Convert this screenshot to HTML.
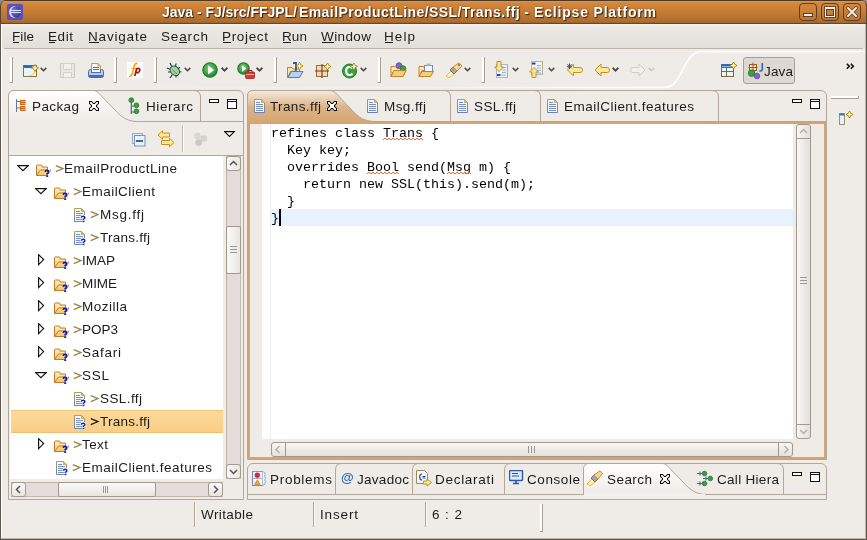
<!DOCTYPE html>
<html><head><meta charset="utf-8">
<style>
*{box-sizing:border-box}
html,body{margin:0;padding:0}
body{width:867px;height:540px;overflow:hidden;position:relative;background:#efebe7;font-family:'Liberation Sans',sans-serif;font-size:14px;color:#1a1a1a}
.a{position:absolute}
.t{position:absolute;white-space:pre;line-height:1;will-change:transform}
</style></head><body>
<div class="a" style="left:0;top:0;width:8px;height:8px;background:#8e8e8e"></div>
<div class="a" style="left:859px;top:0;width:8px;height:8px;background:#8e8e8e"></div>
<div class="a" style="left:0;top:0;width:867px;height:24px;background:linear-gradient(#4c3a28 0px,#4c3a28 1px,#e49441 1px,#d5873b 3px,#c67b34 12px,#ad6c2e 22px,#9a6030 23px,#6a4526 23px,#6a4526 24px);border-radius:6px 6px 0 0;border-left:1px solid #5a4530;border-right:1px solid #5a4530"></div>
<div class="a" style="left:0;top:24px;width:1px;height:516px;background:#5f574e"></div>
<div class="a" style="left:1px;top:24px;width:1px;height:514px;background:#fff"></div>
<div class="a" style="left:866px;top:24px;width:1px;height:516px;background:#5f574e"></div>
<div class="a" style="left:865px;top:24px;width:1px;height:515px;background:#c2b8ae"></div>
<div class="a" style="left:1px;top:538px;width:865px;height:1px;background:#c2b8ae"></div>
<div class="a" style="left:0;top:539px;width:867px;height:1px;background:#5f574e"></div>
<div class="a" style="left:7px;top:4px;width:16px;height:16px;background:#5a4fc0;border-radius:2px"></div>
<div class="a" style="left:9px;top:6px;width:12px;height:12px;border-radius:50%;background:radial-gradient(circle at 40% 40%,#6d7fd8,#27206e)"></div>
<div class="a" style="left:9px;top:6px;width:12px;height:12px;border-radius:50%;box-shadow:inset 2px 0 0 #e8d0f0"></div>
<div class="a" style="left:11px;top:10px;width:10px;height:1px;background:#e0e4ff"></div>
<div class="a" style="left:11px;top:12px;width:10px;height:1px;background:#e0e4ff"></div>
<div class="t" style="left:162px;top:5px;font-size:14px;font-weight:700;color:#fff;font-family:'Liberation Sans',sans-serif;letter-spacing:-0.021px;text-shadow:1px 1px 1px #3a2208,0 0 1.5px #5a3a1a;">Java - FJ/src/FFJPL/</div>
<div class="t" style="left:299px;top:5px;font-size:14px;font-weight:700;color:#fff;font-family:'Liberation Sans',sans-serif;letter-spacing:0.418px;text-shadow:1px 1px 1px #3a2208,0 0 1.5px #5a3a1a;">EmailProductLine/SSL/Trans.ffj -</div>
<div class="t" style="left:534px;top:5px;font-size:14px;font-weight:700;color:#fff;font-family:'Liberation Sans',sans-serif;letter-spacing:0.820px;text-shadow:1px 1px 1px #3a2208,0 0 1.5px #5a3a1a;">Eclipse Platform</div>
<div class="a" style="left:799px;top:3px;width:18px;height:18px;border:1px solid #5a3f22;border-radius:4px;background:linear-gradient(#d4873c,#bf7633)"></div>
<div class="a" style="left:821px;top:3px;width:18px;height:18px;border:1px solid #5a3f22;border-radius:4px;background:linear-gradient(#d4873c,#bf7633)"></div>
<div class="a" style="left:843px;top:3px;width:18px;height:18px;border:1px solid #5a3f22;border-radius:4px;background:linear-gradient(#d4873c,#bf7633)"></div>
<div class="a" style="left:803px;top:13px;width:10px;height:4px;background:#f4efe6;border:1px solid #5a3f22"></div>
<div class="a" style="left:825px;top:7px;width:10px;height:10px;border:1px solid #f4efe6;border-top-width:2px;box-shadow:inset 0 0 0 1px #5a3f22,0 0 0 1px #6a4a28"></div>
<svg class="a" style="left:843px;top:3px" width="18" height="18" viewBox="0 0 18 18"><path d="M5 5L13 13M13 5L5 13" stroke="#5a3f22" stroke-width="3.6" stroke-linecap="round"/><path d="M5 5L13 13M13 5L5 13" stroke="#f4efe6" stroke-width="2" stroke-linecap="round"/></svg>
<div class="a" style="left:2px;top:24px;width:863px;height:24px;background:linear-gradient(#f6f4f1,#ece9e5 3px,#e3dfd9)"></div>
<div class="a" style="left:4px;top:48px;width:859px;height:1px;background:#bdb4a9"></div>
<div class="t" style="left:12px;top:30px;font-size:13.5px;font-weight:400;color:#1c1c1c;font-family:'Liberation Sans',sans-serif;letter-spacing:0.078px;">File</div>
<div class="t" style="left:48px;top:30px;font-size:13.5px;font-weight:400;color:#1c1c1c;font-family:'Liberation Sans',sans-serif;letter-spacing:0.578px;">Edit</div>
<div class="t" style="left:88px;top:30px;font-size:13.5px;font-weight:400;color:#1c1c1c;font-family:'Liberation Sans',sans-serif;letter-spacing:0.815px;">Navigate</div>
<div class="t" style="left:161px;top:30px;font-size:13.5px;font-weight:400;color:#1c1c1c;font-family:'Liberation Sans',sans-serif;letter-spacing:0.844px;">Search</div>
<div class="t" style="left:222px;top:30px;font-size:13.5px;font-weight:400;color:#1c1c1c;font-family:'Liberation Sans',sans-serif;letter-spacing:0.661px;">Project</div>
<div class="t" style="left:282px;top:30px;font-size:13.5px;font-weight:400;color:#1c1c1c;font-family:'Liberation Sans',sans-serif;letter-spacing:0.117px;">Run</div>
<div class="t" style="left:321px;top:30px;font-size:13.5px;font-weight:400;color:#1c1c1c;font-family:'Liberation Sans',sans-serif;letter-spacing:0.397px;">Window</div>
<div class="t" style="left:384px;top:30px;font-size:13.5px;font-weight:400;color:#1c1c1c;font-family:'Liberation Sans',sans-serif;letter-spacing:1.078px;">Help</div>
<div class="a" style="left:13px;top:42px;width:6px;height:1px;background:#1c1c1c"></div>
<div class="a" style="left:49px;top:42px;width:6px;height:1px;background:#1c1c1c"></div>
<div class="a" style="left:89px;top:42px;width:10px;height:1px;background:#1c1c1c"></div>
<div class="a" style="left:179px;top:42px;width:8px;height:1px;background:#1c1c1c"></div>
<div class="a" style="left:223px;top:42px;width:8px;height:1px;background:#1c1c1c"></div>
<div class="a" style="left:283px;top:42px;width:8px;height:1px;background:#1c1c1c"></div>
<div class="a" style="left:322px;top:42px;width:12px;height:1px;background:#1c1c1c"></div>
<div class="a" style="left:385px;top:42px;width:8px;height:1px;background:#1c1c1c"></div>
<div class="a" style="left:10px;top:57px;width:2px;height:25px;background:#fff"></div>
<div class="a" style="left:12px;top:57px;width:1px;height:26px;background:#ab9f93"></div>
<div class="a" style="left:10px;top:82px;width:3px;height:1px;background:#ab9f93"></div>
<div class="a" style="left:114px;top:57px;width:2px;height:25px;background:#fff"></div>
<div class="a" style="left:116px;top:57px;width:1px;height:26px;background:#ab9f93"></div>
<div class="a" style="left:114px;top:82px;width:3px;height:1px;background:#ab9f93"></div>
<div class="a" style="left:154px;top:57px;width:2px;height:25px;background:#fff"></div>
<div class="a" style="left:156px;top:57px;width:1px;height:26px;background:#ab9f93"></div>
<div class="a" style="left:154px;top:82px;width:3px;height:1px;background:#ab9f93"></div>
<div class="a" style="left:274px;top:57px;width:2px;height:25px;background:#fff"></div>
<div class="a" style="left:276px;top:57px;width:1px;height:26px;background:#ab9f93"></div>
<div class="a" style="left:274px;top:82px;width:3px;height:1px;background:#ab9f93"></div>
<div class="a" style="left:378px;top:57px;width:2px;height:25px;background:#fff"></div>
<div class="a" style="left:380px;top:57px;width:1px;height:26px;background:#ab9f93"></div>
<div class="a" style="left:378px;top:82px;width:3px;height:1px;background:#ab9f93"></div>
<div class="a" style="left:482px;top:57px;width:2px;height:25px;background:#fff"></div>
<div class="a" style="left:484px;top:57px;width:1px;height:26px;background:#ab9f93"></div>
<div class="a" style="left:482px;top:82px;width:3px;height:1px;background:#ab9f93"></div>
<svg class="a" style="left:40px;top:67px" width="8" height="6" viewBox="0 0 8 6"><path d="M0.7 0.9L3.5 3.7L6.3 0.9" fill="none" stroke="#4a4a4a" stroke-width="1.6"/></svg>
<svg class="a" style="left:221px;top:67px" width="8" height="6" viewBox="0 0 8 6"><path d="M0.7 0.9L3.5 3.7L6.3 0.9" fill="none" stroke="#4a4a4a" stroke-width="1.6"/></svg>
<svg class="a" style="left:256px;top:67px" width="8" height="6" viewBox="0 0 8 6"><path d="M0.7 0.9L3.5 3.7L6.3 0.9" fill="none" stroke="#4a4a4a" stroke-width="1.6"/></svg>
<svg class="a" style="left:612px;top:67px" width="8" height="6" viewBox="0 0 8 6"><path d="M0.7 0.9L3.5 3.7L6.3 0.9" fill="none" stroke="#4a4a4a" stroke-width="1.6"/></svg>
<div class="a" style="left:743px;top:57px;width:52px;height:27px;background:#ddd8d1;border:1px solid #a69e94;border-radius:3px"></div>
<svg class="a" style="left:22px;top:62px" width="18" height="16" viewBox="0 0 18 16"><rect x="1.5" y="3.5" width="13" height="11" fill="#e4f6fc" stroke="#8a7448" stroke-width="1"/><rect x="1.5" y="3" width="9" height="3" fill="#2e6bb8"/><path d="M13.5 7 Q13.5 13 6 14" fill="none" stroke="#ffd24a" stroke-width="1"/><path d="M13 2.5 L14.2 4.8 L16.5 6 L14.2 7.2 L13 9.5 L11.8 7.2 L9.5 6 L11.8 4.8 Z" fill="#f7e27a" stroke="#a8800c" stroke-width="1"/><path d="M13 3.5V8.5M10.5 6H15.5" stroke="#fffbe0" stroke-width="0.8"/></svg>
<svg class="a" style="left:60px;top:63px" width="15" height="15" viewBox="0 0 15 15"><path d="M0.5 0.5H14.5V14.5H0.5Z" fill="#ebe8e3" stroke="#cdc8c1" stroke-width="1"/><rect x="3.5" y="0.5" width="8" height="6" fill="#f3f1ee" stroke="#d6d1ca"/><rect x="3.5" y="9.5" width="8" height="5" fill="#f3f1ee" stroke="#d6d1ca"/></svg>
<svg class="a" style="left:88px;top:63px" width="16" height="15" viewBox="0 0 16 15"><path d="M3.5 0.5 H10 L12.5 3 V9.5 H3.5 Z" fill="#f6f8fc" stroke="#b89d52"/><path d="M10 0.5 V3 H12.5" fill="#e8c070" stroke="#c8a050"/><path d="M5 4.5h6M5 6.5h6" stroke="#4a6bb0" stroke-width="1.2"/><path d="M0.5 8.5 Q0.5 6.5 2.5 6.5 H3.5 V9.5 H12.5 V6.5 H13.5 Q15.5 6.5 15.5 8.5 V12.5 Q15.5 14.5 13.5 14.5 H2.5 Q0.5 14.5 0.5 12.5 Z" fill="#b8cdea" stroke="#4a6bb0"/><rect x="1" y="12" width="14" height="2.2" fill="#4a6bb0"/></svg>
<svg class="a" style="left:127px;top:62px" width="16" height="16" viewBox="0 0 16 16"><rect x="0" y="0" width="16" height="16" fill="#fdfdfd"/><path d="M2 14.5 Q5 14.5 6 9 L7.5 3 Q8.5 1 10.5 1.5" fill="none" stroke="#f5a21c" stroke-width="1.6"/><path d="M4.5 6.5 H9" stroke="#f5a21c" stroke-width="1"/><path d="M9.8 6 L7.8 14 M9.6 7 Q12.8 5.5 12.8 8 Q12.5 11 9.4 10.5" fill="none" stroke="#b01010" stroke-width="1.7"/></svg>
<svg class="a" style="left:166px;top:62px" width="17" height="17" viewBox="0 0 17 17"><g stroke="#1c3a3a" stroke-width="1.2"><path d="M4 1 L6 5M10 1.5L9.5 4.5M1 6 L5 7.5M2 10L5.5 10M4 16L6.5 12.5M15.5 10L12 9.5M14 5.5L11 7M10 15.5 L10 12"/></g><ellipse cx="8.8" cy="8.8" rx="4.2" ry="5.3" transform="rotate(-45 8.8 8.8)" fill="#a8d08a" stroke="#1f5a7a" stroke-width="1"/><path d="M6.5 8 L11 12" stroke="#6a9a50" stroke-width="1"/></svg>
<svg class="a" style="left:184px;top:67px" width="8" height="6" viewBox="0 0 8 6"><path d="M0.7 0.9L3.5 3.7L6.3 0.9" fill="none" stroke="#4a4a4a" stroke-width="1.6"/></svg>
<svg class="a" style="left:202px;top:62px" width="16" height="16" viewBox="0 0 16 16"><defs><radialGradient id="rg" cx="0.45" cy="0.4" r="0.6"><stop offset="0" stop-color="#8ad07a"/><stop offset="0.7" stop-color="#3a9e40"/><stop offset="1" stop-color="#237a2a"/></radialGradient></defs><circle cx="8" cy="8" r="7.2" fill="url(#rg)" stroke="#1f7a2a" stroke-width="1.1"/><path d="M6 3.6 L12.2 8 L6 12.4 Z" fill="#fff"/></svg>
<svg class="a" style="left:221px;top:67px" width="8" height="6" viewBox="0 0 8 6"><path d="M0.7 0.9L3.5 3.7L6.3 0.9" fill="none" stroke="#4a4a4a" stroke-width="1.6"/></svg>
<svg class="a" style="left:237px;top:62px" width="18" height="17" viewBox="0 0 18 17"><circle cx="6.5" cy="6.5" r="5.7" fill="url(#rg)" stroke="#1f7a2a" stroke-width="1.1"/><path d="M5 3.3 L9.5 6.5 L5 9.7 Z" fill="#fff"/><rect x="8.5" y="10" width="9" height="6.5" rx="1" fill="#d83a32" stroke="#a02020" stroke-width="0.8"/><path d="M11 10 V8.5 H15 V10" fill="none" stroke="#a02020" stroke-width="1"/><path d="M9 12.5 H17" stroke="#f8c0b0" stroke-width="0.8"/></svg>
<svg class="a" style="left:256px;top:67px" width="8" height="6" viewBox="0 0 8 6"><path d="M0.7 0.9L3.5 3.7L6.3 0.9" fill="none" stroke="#4a4a4a" stroke-width="1.6"/></svg>
<svg class="a" style="left:286px;top:62px" width="18" height="16" viewBox="0 0 18 16"><path d="M1.5 15.5 L1.5 5.5 L6 5.5 L7 7 L13.5 7 L13.5 9" fill="#fbe7b0" stroke="#c0822a" stroke-width="1"/><path d="M1.5 15.5 L4.5 9.5 L16.5 9.5 L13.5 15.5 Z" fill="#f3cf7a" stroke="#c0822a" stroke-width="1"/><path d="M7 1 H10 V8 Q10 10 7.5 10 Q6 10 5.5 9" fill="none" stroke="#2a5ab0" stroke-width="1.8"/><path d="M2 15.5 L5.5 9.5 H17 L13.5 15.5 Z" fill="#b8d4f4" stroke="#5a7ac0" stroke-width="1"/><path d="M13.5 0.5 L14.7 2.8 L17.0 4 L14.7 5.2 L13.5 7.5 L12.3 5.2 L10.0 4 L12.3 2.8 Z" fill="#f7e27a" stroke="#a8800c" stroke-width="1"/><path d="M13.5 1.5V6.5M11.0 4H16.0" stroke="#fffbe0" stroke-width="0.8"/></svg>
<svg class="a" style="left:315px;top:62px" width="17" height="16" viewBox="0 0 17 16"><rect x="1.5" y="3.5" width="11" height="11" fill="#f0dcb0" stroke="#a06a40" stroke-width="1"/><path d="M7 2V16M0 9H14" stroke="#6a3a20" stroke-width="1.1"/><path d="M12.5 1.0 L13.7 3.3 L16.0 4.5 L13.7 5.7 L12.5 8.0 L11.3 5.7 L9.0 4.5 L11.3 3.3 Z" fill="#f7e27a" stroke="#a8800c" stroke-width="1"/><path d="M12.5 2.0V7.0M10.0 4.5H15.0" stroke="#fffbe0" stroke-width="0.8"/></svg>
<svg class="a" style="left:342px;top:62px" width="17" height="17" viewBox="0 0 17 17"><circle cx="7.5" cy="9" r="7" fill="#3aa043" stroke="#1f7a2a" stroke-width="1"/><path d="M10.5 6.3 Q9.5 5 7.8 5 Q4.2 5 4.2 9 Q4.2 13 7.8 13 Q9.5 13 10.5 11.7" fill="none" stroke="#fff" stroke-width="2.2"/><path d="M12 1.0 L13.2 3.3 L15.5 4.5 L13.2 5.7 L12 8.0 L10.8 5.7 L8.5 4.5 L10.8 3.3 Z" fill="#f7e27a" stroke="#a8800c" stroke-width="1"/><path d="M12 2.0V7.0M9.5 4.5H14.5" stroke="#fffbe0" stroke-width="0.8"/></svg>
<svg class="a" style="left:360px;top:67px" width="8" height="6" viewBox="0 0 8 6"><path d="M0.7 0.9L3.5 3.7L6.3 0.9" fill="none" stroke="#4a4a4a" stroke-width="1.6"/></svg>
<svg class="a" style="left:390px;top:62px" width="17" height="16" viewBox="0 0 17 16"><path d="M1.0 14.5 L1.0 4.5 L5.5 4.5 L6.5 6 L13.0 6 L13.0 8" fill="#fbe7b0" stroke="#c0822a" stroke-width="1"/><path d="M1.0 14.5 L4.0 8.5 L16.0 8.5 L13.0 14.5 Z" fill="#f3cf7a" stroke="#c0822a" stroke-width="1"/><circle cx="9" cy="3.6" r="2.9" fill="#7a6ac8" stroke="#5a4aa8" stroke-width="0.8"/><circle cx="13" cy="6.6" r="2.9" fill="#3aa043" stroke="#1f7a2a" stroke-width="0.8"/><path d="M1 14.5 L4 8.5 H16 L13 14.5 Z" fill="#f3cf7a" stroke="#c0822a" stroke-width="1"/></svg>
<svg class="a" style="left:418px;top:62px" width="16" height="16" viewBox="0 0 16 16"><path d="M1.0 14.5 L1.0 4.5 L5.5 4.5 L6.5 6 L12.0 6 L12.0 8" fill="#fbe7b0" stroke="#c0822a" stroke-width="1"/><path d="M1.0 14.5 L4.0 8.5 L15.0 8.5 L12.0 14.5 Z" fill="#f3cf7a" stroke="#c0822a" stroke-width="1"/><rect x="6.5" y="3.5" width="8" height="6" fill="#f4f6fb" stroke="#7a8ab8" stroke-width="1"/><rect x="8.5" y="1.5" width="4" height="2" fill="#aabbe0"/><path d="M1 14.5 L4 9.5 H15.5 L12.5 14.5 Z" fill="#f3cf7a" stroke="#c0822a" stroke-width="1"/></svg>
<svg class="a" style="left:445px;top:62px" width="18" height="16" viewBox="0 0 18 16"><path d="M1 14 L6 9 L9 12 L4 16 Z" fill="#fff3b0" stroke="#f0b040" stroke-width="1"/><path d="M5 8 L8 5 L12 9 L9 12 Z" fill="#a8a4a8" stroke="#6a6060" stroke-width="0.8"/><path d="M8 5 L14 0.8 L17 4 L12 9 Z" fill="#f8d890" stroke="#d08a20" stroke-width="1"/><circle cx="14" cy="3" r="0.9" fill="#3a5ab0"/></svg>
<svg class="a" style="left:464px;top:67px" width="8" height="6" viewBox="0 0 8 6"><path d="M0.7 0.9L3.5 3.7L6.3 0.9" fill="none" stroke="#4a4a4a" stroke-width="1.6"/></svg>
<svg class="a" style="left:494px;top:61px" width="15" height="17" viewBox="0 0 15 17"><rect x="2.5" y="3.5" width="11" height="13" fill="#eef3fb" stroke="#a8b8d8" stroke-width="1"/><path d="M8 6.5h4M8 9h4M8 11.5h4M7 14h5" stroke="#9ab0d8"/><rect x="3" y="13" width="3.5" height="2" fill="#2a4a98"/><rect x="13" y="3" width="1" height="14" fill="#b8b080"/><path d="M3 0.5 H7 V6 H9.5 L5 10.5 L0.5 6 H3 Z" fill="#fde89a" stroke="#c8901a" stroke-width="1"/></svg>
<svg class="a" style="left:512px;top:67px" width="8" height="6" viewBox="0 0 8 6"><path d="M0.7 0.9L3.5 3.7L6.3 0.9" fill="none" stroke="#4a4a4a" stroke-width="1.6"/></svg>
<svg class="a" style="left:529px;top:61px" width="15" height="17" viewBox="0 0 15 17"><rect x="2.5" y="0.5" width="11" height="13" fill="#eef3fb" stroke="#a8b8d8" stroke-width="1"/><path d="M8 4.5h4M8 7h4M8 9.5h4M8 12h4" stroke="#9ab0d8"/><rect x="3" y="1.5" width="3.5" height="2" fill="#2a4a98"/><rect x="13" y="0" width="1" height="13" fill="#b8b080"/><path d="M3 16.5 H7 V11 H9.5 L5 6.5 L0.5 11 H3 Z" fill="#fde89a" stroke="#c8901a" stroke-width="1"/></svg>
<svg class="a" style="left:548px;top:67px" width="8" height="6" viewBox="0 0 8 6"><path d="M0.7 0.9L3.5 3.7L6.3 0.9" fill="none" stroke="#4a4a4a" stroke-width="1.6"/></svg>
<svg class="a" style="left:566px;top:63px" width="18" height="14" viewBox="0 0 18 14"><path d="M1.5 7 L7.5 1 V4.5 H14 Q16.5 4.5 16.5 7 Q16.5 9.5 14 9.5 H7.5 V13 Z" fill="#fde89a" stroke="#c8901a" stroke-width="1"/><path d="M3.5 0.5V6M1 3.3H6M1.5 1.2L5.5 5.3M5.5 1.2L1.5 5.3" stroke="#2a4a98" stroke-width="0.9"/></svg>
<svg class="a" style="left:594px;top:63px" width="16" height="14" viewBox="0 0 16 14"><path d="M1 7 L7 1 V4.5 H13 Q15.5 4.5 15.5 7 Q15.5 9.5 13 9.5 H7 V13 Z" fill="#fde89a" stroke="#c8901a" stroke-width="1"/></svg>
<svg class="a" style="left:612px;top:67px" width="8" height="6" viewBox="0 0 8 6"><path d="M0.7 0.9L3.5 3.7L6.3 0.9" fill="none" stroke="#4a4a4a" stroke-width="1.6"/></svg>
<svg class="a" style="left:630px;top:63px" width="16" height="14" viewBox="0 0 16 14"><path d="M15 7 L9 1 V4.5 H3 Q0.5 4.5 0.5 7 Q0.5 9.5 3 9.5 H9 V13 Z" fill="#f2f0ec" stroke="#d0ccc6" stroke-width="1"/></svg>
<svg class="a" style="left:648px;top:67px" width="8" height="6" viewBox="0 0 8 6"><path d="M0.7 0.9L3.5 3.7L6.3 0.9" fill="none" stroke="#cfc9c1" stroke-width="1.6"/></svg>
<svg class="a" style="left:721px;top:62px" width="16" height="16" viewBox="0 0 16 16"><rect x="0.5" y="2.5" width="12" height="12" fill="#e8f6fc" stroke="#7a6a40" stroke-width="1"/><rect x="1" y="2" width="9" height="2.5" fill="#2e6bb8"/><path d="M1 9.5H12.5M5.5 5V14.5M1 5.5H12.5" stroke="#7a6a40" stroke-width="1"/><path d="M12.5 0.0 L13.7 2.3 L16.0 3.5 L13.7 4.7 L12.5 7.0 L11.3 4.7 L9.0 3.5 L11.3 2.3 Z" fill="#f7e27a" stroke="#a8800c" stroke-width="1"/><path d="M12.5 1.0V6.0M10.0 3.5H15.0" stroke="#fffbe0" stroke-width="0.8"/></svg>
<svg class="a" style="left:747px;top:62px" width="18" height="18" viewBox="0 0 18 18"><rect x="2.5" y="2.5" width="7" height="6" fill="#f6dcae" stroke="#9a5a30" stroke-width="1"/><path d="M6 0.5V9M1.5 5.5H10.5" stroke="#9a5a30" stroke-width="1"/><circle cx="4.6" cy="11.2" r="3.3" fill="#3aa043" stroke="#1f7a2a" stroke-width="0.8"/><circle cx="10" cy="14" r="2.8" fill="#7a6ac8" stroke="#5a4aa8" stroke-width="0.8"/><path d="M15.3 1 V7 Q15.3 9 13.3 9 L12.3 8.8" fill="none" stroke="#2a6ab8" stroke-width="1.6"/></svg>
<svg class="a" style="left:0px;top:49px" width="867" height="42" viewBox="0 0 867 42"><defs><linearGradient id="cg" gradientUnits="userSpaceOnUse" x1="0" y1="0" x2="867" y2="0"><stop offset="0" stop-color="#fff" stop-opacity="0"/><stop offset="0.5" stop-color="#fff" stop-opacity="0.35"/><stop offset="0.74" stop-color="#fff" stop-opacity="1"/></linearGradient></defs><path d="M2 38.5 L664 38.5 C684 38.5 682 2.5 702 2.5 L865 2.5" fill="none" stroke="url(#cg)" stroke-width="1.6"/></svg>
<div class="t" style="left:764px;top:65px;font-size:13.5px;font-weight:400;color:#1c1c1c;font-family:'Liberation Sans',sans-serif;letter-spacing:0.156px;">Java</div>
<svg class="a" style="left:846px;top:63px" width="10" height="7" viewBox="0 0 10 7"><path d="M0.8 0.8L3.3 3.3L0.8 5.8M4.8 0.8L7.3 3.3L4.8 5.8" fill="none" stroke="#111" stroke-width="1.6"/></svg>
<div class="a" style="left:8px;top:90px;width:236px;height:410px;border:1px solid #b1a79b;border-radius:6px 6px 0 0;background:#efebe7"></div>
<svg class="a" style="left:8px;top:90px" width="134" height="33" viewBox="0 0 134 33"><defs><linearGradient id="tg" x1="0" y1="0" x2="0" y2="1"><stop offset="0" stop-color="#ffffff"/><stop offset="1" stop-color="#efebe7"/></linearGradient></defs><path d="M0.5 32 V6 Q0.5 0.5 6 0.5 H85 C88 0.5 90 2 92 4.5 L106 19 C114 28 120 31.5 130 31.5 V32 Z" fill="url(#tg)"/><path d="M0.5 32 V6 Q0.5 0.5 6 0.5 H85 C88 0.5 90 2 92 4.5 L106 19 C114 28 120 31.5 130 31.5" fill="none" stroke="#b1a79b" stroke-width="1"/></svg>
<div class="a" style="left:134px;top:121px;width:109px;height:1px;background:#b1a79b"></div>
<svg class="a" style="left:194px;top:90px" width="7" height="31" viewBox="0 0 7 31"><path d="M0 0.5 Q6.5 0.5 6.5 7 V31" fill="none" stroke="#b1a79b"/></svg>
<svg class="a" style="left:14px;top:98px" width="12" height="15" viewBox="0 0 12 15"><path d="M2.5 1V14M2.5 3.5H6M2.5 10H6" stroke="#6a7a9a" stroke-width="1"/><rect x="6" y="2" width="5.5" height="5" fill="#c86a1a"/><rect x="6" y="8" width="5.5" height="5" fill="#c86a1a"/><path d="M7.5 3.5h1M9.5 3.5h1M7.5 5.5h1M9.5 5.5h1M7.5 9.5h1M9.5 9.5h1M7.5 11.5h1M9.5 11.5h1" stroke="#fff0b0"/></svg>
<div class="t" style="left:32px;top:100px;font-size:13.5px;font-weight:400;color:#1c1c1c;font-family:'Liberation Sans',sans-serif;letter-spacing:0.394px;">Packag</div>
<svg class="a" style="left:89px;top:101px" width="10" height="10" viewBox="0 0 10 10"><polygon points="0.5,0.5 2.5,0.5 3.5,1.5 4.5,2.5 5.5,2.5 6.5,1.5 7.5,0.5 9.5,0.5 9.5,2.5 8.5,3.5 7.5,4.5 7.5,5.5 8.5,6.5 9.5,7.5 9.5,9.5 7.5,9.5 6.5,8.5 5.5,7.5 4.5,7.5 3.5,8.5 2.5,9.5 0.5,9.5 0.5,7.5 1.5,6.5 2.5,5.5 2.5,4.5 1.5,3.5 0.5,2.5" fill="#fff" stroke="#000" stroke-width="1.05" stroke-linejoin="miter"/></svg>
<svg class="a" style="left:127px;top:96px" width="13" height="19" viewBox="0 0 13 19"><path d="M4.3 5V18M4.3 10H9M4.3 16H9" stroke="#5a6080" stroke-width="1.2"/><circle cx="4.3" cy="4.2" r="2.4" fill="#3d9a47" stroke="#237a30" stroke-width="0.8"/><circle cx="9.4" cy="9.3" r="2.4" fill="#3d9a47" stroke="#237a30" stroke-width="0.8"/><circle cx="9.4" cy="15.3" r="2.4" fill="#3d9a47" stroke="#237a30" stroke-width="0.8"/></svg>
<div class="t" style="left:146px;top:100px;font-size:13.5px;font-weight:400;color:#1c1c1c;font-family:'Liberation Sans',sans-serif;letter-spacing:0.581px;">Hierarc</div>
<div class="a" style="left:209px;top:99px;width:10px;height:4px;border:1px solid #111;background:#fff"></div>
<div class="a" style="left:227px;top:99px;width:10px;height:10px;border:1px solid #111;background:#fff"></div>
<div class="a" style="left:228px;top:101px;width:8px;height:1px;background:#111"></div>
<svg class="a" style="left:131px;top:132px" width="15" height="15" viewBox="0 0 15 15"><rect x="1.5" y="1.5" width="10" height="10" fill="#dfeefb" stroke="#9aaccb"/><rect x="3.5" y="3.5" width="10.5" height="10.5" fill="#e8f4fc" stroke="#7f92b6"/><path d="M5 9h7" stroke="#1d3f8a" stroke-width="1.6"/></svg>
<svg class="a" style="left:157px;top:130px" width="18" height="18" viewBox="0 0 18 18"><path d="M1 5 L5.5 0.8 V3 H12.5 V7 H5.5 V9.2 Z" fill="#fde89a" stroke="#c8901a" stroke-width="1"/><path d="M17 12.5 L12.5 8.3 V10.5 H4.5 V14.5 H12.5 V16.7 Z" fill="#fde89a" stroke="#c8901a" stroke-width="1"/></svg>
<div class="a" style="left:182px;top:125px;width:2px;height:27px;background:linear-gradient(90deg,#c4bcb2 1px,#fff 1px)"></div>
<svg class="a" style="left:193px;top:132px" width="15" height="15" viewBox="0 0 15 15"><circle cx="4.5" cy="4" r="3.3" fill="#dad6d1"/><circle cx="10.8" cy="6.5" r="3.3" fill="#d6d2cd"/><circle cx="5.6" cy="10.6" r="3.3" fill="#cbc7c2"/></svg>
<svg class="a" style="left:224px;top:131px" width="12" height="7" viewBox="0 0 12 7"><path d="M0.6 0.6L10.4 0.6L5.5 5.5Z" fill="#fff" stroke="#000" stroke-width="1.1"/></svg>
<div class="a" style="left:9px;top:155px;width:234px;height:1px;background:#b1a79b"></div>
<div class="a" style="left:10px;top:156px;width:213px;height:323px;background:#fff"></div>
<div class="a" style="left:11px;top:410px;width:212px;height:23px;background:linear-gradient(#f2c677 0,#f2c677 1px,#fcd99a 1px,#f8cf86 22px,#f0c070 22px)"></div>
<svg class="a" style="left:17px;top:165px" width="12" height="7" viewBox="0 0 12 7"><path d="M0.6 0.6L11.2 0.6L5.9 5.6Z" fill="#fff" stroke="#111" stroke-width="1.15"/></svg>
<svg class="a" style="left:36px;top:164px" width="16" height="14" viewBox="0 0 16 14"><defs><linearGradient id="fg" x1="0" y1="0" x2="0" y2="1"><stop offset="0" stop-color="#fff2c8"/><stop offset="1" stop-color="#f2c46a"/></linearGradient></defs><path d="M0.5 11.5 V2 Q0.5 1 1.5 1 H5 Q6 1 6 2 V3 H11.5 V11.5 Z" fill="url(#fg)" stroke="#c27a28" stroke-width="1"/><path d="M1 11 L4.5 6 H11.5" fill="none" stroke="#c27a28" stroke-width="1"/><path d="M9.2 7.8 Q9.4 6.4 11 6.4 Q12.8 6.4 12.8 8 Q12.8 9.1 11.2 9.6 V10.6" fill="none" stroke="#1020b8" stroke-width="1.7"/><rect x="10.2" y="11.4" width="2" height="1.6" fill="#1020b8"/><rect x="14" y="5.5" width="1" height="2" fill="#b89060"/></svg>
<svg class="a" style="left:55px;top:164px" width="10" height="10" viewBox="0 0 10 10"><path d="M0.8 1.6 L8 4.6 L0.8 7.6" fill="none" stroke="#9a8248" stroke-width="1.25"/></svg>
<div class="t" style="left:64px;top:162px;font-size:13.5px;font-weight:400;color:#1c1c1c;font-family:'Liberation Sans',sans-serif;letter-spacing:0.479px;">EmailProductLine</div>
<svg class="a" style="left:35px;top:188px" width="12" height="7" viewBox="0 0 12 7"><path d="M0.6 0.6L11.2 0.6L5.9 5.6Z" fill="#fff" stroke="#111" stroke-width="1.15"/></svg>
<svg class="a" style="left:54px;top:187px" width="16" height="14" viewBox="0 0 16 14"><defs><linearGradient id="fg" x1="0" y1="0" x2="0" y2="1"><stop offset="0" stop-color="#fff2c8"/><stop offset="1" stop-color="#f2c46a"/></linearGradient></defs><path d="M0.5 11.5 V2 Q0.5 1 1.5 1 H5 Q6 1 6 2 V3 H11.5 V11.5 Z" fill="url(#fg)" stroke="#c27a28" stroke-width="1"/><path d="M1 11 L4.5 6 H11.5" fill="none" stroke="#c27a28" stroke-width="1"/><path d="M9.2 7.8 Q9.4 6.4 11 6.4 Q12.8 6.4 12.8 8 Q12.8 9.1 11.2 9.6 V10.6" fill="none" stroke="#1020b8" stroke-width="1.7"/><rect x="10.2" y="11.4" width="2" height="1.6" fill="#1020b8"/><rect x="14" y="5.5" width="1" height="2" fill="#b89060"/></svg>
<svg class="a" style="left:73px;top:187px" width="10" height="10" viewBox="0 0 10 10"><path d="M0.8 1.6 L8 4.6 L0.8 7.6" fill="none" stroke="#9a8248" stroke-width="1.25"/></svg>
<div class="t" style="left:82px;top:185px;font-size:13.5px;font-weight:400;color:#1c1c1c;font-family:'Liberation Sans',sans-serif;letter-spacing:0.472px;">EmailClient</div>
<svg class="a" style="left:74px;top:208px" width="12" height="15" viewBox="0 0 12 15"><defs><linearGradient id="fb" x1="0" y1="0" x2="0" y2="1"><stop offset="0" stop-color="#b49a58"/><stop offset="1" stop-color="#6e80b0"/></linearGradient></defs><path d="M0.5 0.5 H7.5 L10.5 3.5 V13.5 H0.5 Z" fill="#f4f7fc" stroke="url(#fb)" stroke-width="1"/><path d="M7.5 0.5 V3.5 H10.5 Z" fill="#e2bc64" stroke="#c8a050" stroke-width="0.8"/><path d="M2 3.5h4M2 5.5h7M2 7.5h7M2 9.5h7M2 11.5h7" stroke="#7390c8" stroke-width="1"/><path d="M7.4 9.7 Q7.6 8.2 9.2 8.2 Q10.9 8.2 10.9 9.7 Q10.9 10.7 9.4 11.1 V11.9" fill="none" stroke="#fff" stroke-width="3"/><rect x="7.9" y="12.1" width="2.8" height="2.6" fill="#fff"/><path d="M7.4 9.7 Q7.6 8.2 9.2 8.2 Q10.9 8.2 10.9 9.7 Q10.9 10.7 9.4 11.1 V11.9" fill="none" stroke="#1424b0" stroke-width="1.5"/><rect x="8.5" y="12.7" width="1.8" height="1.5" fill="#1424b0"/></svg>
<svg class="a" style="left:90px;top:210px" width="10" height="10" viewBox="0 0 10 10"><path d="M0.8 1.6 L8 4.6 L0.8 7.6" fill="none" stroke="#9a8248" stroke-width="1.25"/></svg>
<div class="t" style="left:100px;top:208px;font-size:13.5px;font-weight:400;color:#1c1c1c;font-family:'Liberation Sans',sans-serif;letter-spacing:0.747px;">Msg.ffj</div>
<svg class="a" style="left:74px;top:231px" width="12" height="15" viewBox="0 0 12 15"><defs><linearGradient id="fb" x1="0" y1="0" x2="0" y2="1"><stop offset="0" stop-color="#b49a58"/><stop offset="1" stop-color="#6e80b0"/></linearGradient></defs><path d="M0.5 0.5 H7.5 L10.5 3.5 V13.5 H0.5 Z" fill="#f4f7fc" stroke="url(#fb)" stroke-width="1"/><path d="M7.5 0.5 V3.5 H10.5 Z" fill="#e2bc64" stroke="#c8a050" stroke-width="0.8"/><path d="M2 3.5h4M2 5.5h7M2 7.5h7M2 9.5h7M2 11.5h7" stroke="#7390c8" stroke-width="1"/><path d="M7.4 9.7 Q7.6 8.2 9.2 8.2 Q10.9 8.2 10.9 9.7 Q10.9 10.7 9.4 11.1 V11.9" fill="none" stroke="#fff" stroke-width="3"/><rect x="7.9" y="12.1" width="2.8" height="2.6" fill="#fff"/><path d="M7.4 9.7 Q7.6 8.2 9.2 8.2 Q10.9 8.2 10.9 9.7 Q10.9 10.7 9.4 11.1 V11.9" fill="none" stroke="#1424b0" stroke-width="1.5"/><rect x="8.5" y="12.7" width="1.8" height="1.5" fill="#1424b0"/></svg>
<svg class="a" style="left:90px;top:233px" width="10" height="10" viewBox="0 0 10 10"><path d="M0.8 1.6 L8 4.6 L0.8 7.6" fill="none" stroke="#9a8248" stroke-width="1.25"/></svg>
<div class="t" style="left:100px;top:231px;font-size:13.5px;font-weight:400;color:#1c1c1c;font-family:'Liberation Sans',sans-serif;letter-spacing:0.248px;">Trans.ffj</div>
<svg class="a" style="left:38px;top:254px" width="8" height="12" viewBox="0 0 8 12"><path d="M0.6 0.6L5.6 5.6L0.6 10.6Z" fill="#fff" stroke="#111" stroke-width="1.15"/></svg>
<svg class="a" style="left:54px;top:256px" width="16" height="14" viewBox="0 0 16 14"><defs><linearGradient id="fg" x1="0" y1="0" x2="0" y2="1"><stop offset="0" stop-color="#fff2c8"/><stop offset="1" stop-color="#f2c46a"/></linearGradient></defs><path d="M0.5 11.5 V2 Q0.5 1 1.5 1 H5 Q6 1 6 2 V3 H11.5 V11.5 Z" fill="url(#fg)" stroke="#c27a28" stroke-width="1"/><path d="M1 11 L4.5 6 H11.5" fill="none" stroke="#c27a28" stroke-width="1"/><path d="M9.2 7.8 Q9.4 6.4 11 6.4 Q12.8 6.4 12.8 8 Q12.8 9.1 11.2 9.6 V10.6" fill="none" stroke="#1020b8" stroke-width="1.7"/><rect x="10.2" y="11.4" width="2" height="1.6" fill="#1020b8"/><rect x="14" y="5.5" width="1" height="2" fill="#b89060"/></svg>
<svg class="a" style="left:73px;top:256px" width="10" height="10" viewBox="0 0 10 10"><path d="M0.8 1.6 L8 4.6 L0.8 7.6" fill="none" stroke="#9a8248" stroke-width="1.25"/></svg>
<div class="t" style="left:82px;top:254px;font-size:13.5px;font-weight:400;color:#1c1c1c;font-family:'Liberation Sans',sans-serif;letter-spacing:-0.005px;">IMAP</div>
<svg class="a" style="left:38px;top:277px" width="8" height="12" viewBox="0 0 8 12"><path d="M0.6 0.6L5.6 5.6L0.6 10.6Z" fill="#fff" stroke="#111" stroke-width="1.15"/></svg>
<svg class="a" style="left:54px;top:279px" width="16" height="14" viewBox="0 0 16 14"><defs><linearGradient id="fg" x1="0" y1="0" x2="0" y2="1"><stop offset="0" stop-color="#fff2c8"/><stop offset="1" stop-color="#f2c46a"/></linearGradient></defs><path d="M0.5 11.5 V2 Q0.5 1 1.5 1 H5 Q6 1 6 2 V3 H11.5 V11.5 Z" fill="url(#fg)" stroke="#c27a28" stroke-width="1"/><path d="M1 11 L4.5 6 H11.5" fill="none" stroke="#c27a28" stroke-width="1"/><path d="M9.2 7.8 Q9.4 6.4 11 6.4 Q12.8 6.4 12.8 8 Q12.8 9.1 11.2 9.6 V10.6" fill="none" stroke="#1020b8" stroke-width="1.7"/><rect x="10.2" y="11.4" width="2" height="1.6" fill="#1020b8"/><rect x="14" y="5.5" width="1" height="2" fill="#b89060"/></svg>
<svg class="a" style="left:73px;top:279px" width="10" height="10" viewBox="0 0 10 10"><path d="M0.8 1.6 L8 4.6 L0.8 7.6" fill="none" stroke="#9a8248" stroke-width="1.25"/></svg>
<div class="t" style="left:82px;top:277px;font-size:13.5px;font-weight:400;color:#1c1c1c;font-family:'Liberation Sans',sans-serif;letter-spacing:-0.083px;">MIME</div>
<svg class="a" style="left:38px;top:300px" width="8" height="12" viewBox="0 0 8 12"><path d="M0.6 0.6L5.6 5.6L0.6 10.6Z" fill="#fff" stroke="#111" stroke-width="1.15"/></svg>
<svg class="a" style="left:54px;top:302px" width="16" height="14" viewBox="0 0 16 14"><defs><linearGradient id="fg" x1="0" y1="0" x2="0" y2="1"><stop offset="0" stop-color="#fff2c8"/><stop offset="1" stop-color="#f2c46a"/></linearGradient></defs><path d="M0.5 11.5 V2 Q0.5 1 1.5 1 H5 Q6 1 6 2 V3 H11.5 V11.5 Z" fill="url(#fg)" stroke="#c27a28" stroke-width="1"/><path d="M1 11 L4.5 6 H11.5" fill="none" stroke="#c27a28" stroke-width="1"/><path d="M9.2 7.8 Q9.4 6.4 11 6.4 Q12.8 6.4 12.8 8 Q12.8 9.1 11.2 9.6 V10.6" fill="none" stroke="#1020b8" stroke-width="1.7"/><rect x="10.2" y="11.4" width="2" height="1.6" fill="#1020b8"/><rect x="14" y="5.5" width="1" height="2" fill="#b89060"/></svg>
<svg class="a" style="left:73px;top:302px" width="10" height="10" viewBox="0 0 10 10"><path d="M0.8 1.6 L8 4.6 L0.8 7.6" fill="none" stroke="#9a8248" stroke-width="1.25"/></svg>
<div class="t" style="left:82px;top:300px;font-size:13.5px;font-weight:400;color:#1c1c1c;font-family:'Liberation Sans',sans-serif;letter-spacing:0.497px;">Mozilla</div>
<svg class="a" style="left:38px;top:323px" width="8" height="12" viewBox="0 0 8 12"><path d="M0.6 0.6L5.6 5.6L0.6 10.6Z" fill="#fff" stroke="#111" stroke-width="1.15"/></svg>
<svg class="a" style="left:54px;top:325px" width="16" height="14" viewBox="0 0 16 14"><defs><linearGradient id="fg" x1="0" y1="0" x2="0" y2="1"><stop offset="0" stop-color="#fff2c8"/><stop offset="1" stop-color="#f2c46a"/></linearGradient></defs><path d="M0.5 11.5 V2 Q0.5 1 1.5 1 H5 Q6 1 6 2 V3 H11.5 V11.5 Z" fill="url(#fg)" stroke="#c27a28" stroke-width="1"/><path d="M1 11 L4.5 6 H11.5" fill="none" stroke="#c27a28" stroke-width="1"/><path d="M9.2 7.8 Q9.4 6.4 11 6.4 Q12.8 6.4 12.8 8 Q12.8 9.1 11.2 9.6 V10.6" fill="none" stroke="#1020b8" stroke-width="1.7"/><rect x="10.2" y="11.4" width="2" height="1.6" fill="#1020b8"/><rect x="14" y="5.5" width="1" height="2" fill="#b89060"/></svg>
<svg class="a" style="left:73px;top:325px" width="10" height="10" viewBox="0 0 10 10"><path d="M0.8 1.6 L8 4.6 L0.8 7.6" fill="none" stroke="#9a8248" stroke-width="1.25"/></svg>
<div class="t" style="left:82px;top:323px;font-size:13.5px;font-weight:400;color:#1c1c1c;font-family:'Liberation Sans',sans-serif;letter-spacing:-0.010px;">POP3</div>
<svg class="a" style="left:38px;top:346px" width="8" height="12" viewBox="0 0 8 12"><path d="M0.6 0.6L5.6 5.6L0.6 10.6Z" fill="#fff" stroke="#111" stroke-width="1.15"/></svg>
<svg class="a" style="left:54px;top:348px" width="16" height="14" viewBox="0 0 16 14"><defs><linearGradient id="fg" x1="0" y1="0" x2="0" y2="1"><stop offset="0" stop-color="#fff2c8"/><stop offset="1" stop-color="#f2c46a"/></linearGradient></defs><path d="M0.5 11.5 V2 Q0.5 1 1.5 1 H5 Q6 1 6 2 V3 H11.5 V11.5 Z" fill="url(#fg)" stroke="#c27a28" stroke-width="1"/><path d="M1 11 L4.5 6 H11.5" fill="none" stroke="#c27a28" stroke-width="1"/><path d="M9.2 7.8 Q9.4 6.4 11 6.4 Q12.8 6.4 12.8 8 Q12.8 9.1 11.2 9.6 V10.6" fill="none" stroke="#1020b8" stroke-width="1.7"/><rect x="10.2" y="11.4" width="2" height="1.6" fill="#1020b8"/><rect x="14" y="5.5" width="1" height="2" fill="#b89060"/></svg>
<svg class="a" style="left:73px;top:348px" width="10" height="10" viewBox="0 0 10 10"><path d="M0.8 1.6 L8 4.6 L0.8 7.6" fill="none" stroke="#9a8248" stroke-width="1.25"/></svg>
<div class="t" style="left:82px;top:346px;font-size:13.5px;font-weight:400;color:#1c1c1c;font-family:'Liberation Sans',sans-serif;letter-spacing:0.744px;">Safari</div>
<svg class="a" style="left:35px;top:372px" width="12" height="7" viewBox="0 0 12 7"><path d="M0.6 0.6L11.2 0.6L5.9 5.6Z" fill="#fff" stroke="#111" stroke-width="1.15"/></svg>
<svg class="a" style="left:54px;top:371px" width="16" height="14" viewBox="0 0 16 14"><defs><linearGradient id="fg" x1="0" y1="0" x2="0" y2="1"><stop offset="0" stop-color="#fff2c8"/><stop offset="1" stop-color="#f2c46a"/></linearGradient></defs><path d="M0.5 11.5 V2 Q0.5 1 1.5 1 H5 Q6 1 6 2 V3 H11.5 V11.5 Z" fill="url(#fg)" stroke="#c27a28" stroke-width="1"/><path d="M1 11 L4.5 6 H11.5" fill="none" stroke="#c27a28" stroke-width="1"/><path d="M9.2 7.8 Q9.4 6.4 11 6.4 Q12.8 6.4 12.8 8 Q12.8 9.1 11.2 9.6 V10.6" fill="none" stroke="#1020b8" stroke-width="1.7"/><rect x="10.2" y="11.4" width="2" height="1.6" fill="#1020b8"/><rect x="14" y="5.5" width="1" height="2" fill="#b89060"/></svg>
<svg class="a" style="left:73px;top:371px" width="10" height="10" viewBox="0 0 10 10"><path d="M0.8 1.6 L8 4.6 L0.8 7.6" fill="none" stroke="#9a8248" stroke-width="1.25"/></svg>
<div class="t" style="left:82px;top:369px;font-size:13.5px;font-weight:400;color:#1c1c1c;font-family:'Liberation Sans',sans-serif;letter-spacing:0.734px;">SSL</div>
<svg class="a" style="left:74px;top:392px" width="12" height="15" viewBox="0 0 12 15"><defs><linearGradient id="fb" x1="0" y1="0" x2="0" y2="1"><stop offset="0" stop-color="#b49a58"/><stop offset="1" stop-color="#6e80b0"/></linearGradient></defs><path d="M0.5 0.5 H7.5 L10.5 3.5 V13.5 H0.5 Z" fill="#f4f7fc" stroke="url(#fb)" stroke-width="1"/><path d="M7.5 0.5 V3.5 H10.5 Z" fill="#e2bc64" stroke="#c8a050" stroke-width="0.8"/><path d="M2 3.5h4M2 5.5h7M2 7.5h7M2 9.5h7M2 11.5h7" stroke="#7390c8" stroke-width="1"/><path d="M7.4 9.7 Q7.6 8.2 9.2 8.2 Q10.9 8.2 10.9 9.7 Q10.9 10.7 9.4 11.1 V11.9" fill="none" stroke="#fff" stroke-width="3"/><rect x="7.9" y="12.1" width="2.8" height="2.6" fill="#fff"/><path d="M7.4 9.7 Q7.6 8.2 9.2 8.2 Q10.9 8.2 10.9 9.7 Q10.9 10.7 9.4 11.1 V11.9" fill="none" stroke="#1424b0" stroke-width="1.5"/><rect x="8.5" y="12.7" width="1.8" height="1.5" fill="#1424b0"/></svg>
<svg class="a" style="left:90px;top:394px" width="10" height="10" viewBox="0 0 10 10"><path d="M0.8 1.6 L8 4.6 L0.8 7.6" fill="none" stroke="#9a8248" stroke-width="1.25"/></svg>
<div class="t" style="left:100px;top:392px;font-size:13.5px;font-weight:400;color:#1c1c1c;font-family:'Liberation Sans',sans-serif;letter-spacing:0.411px;">SSL.ffj</div>
<svg class="a" style="left:74px;top:415px" width="12" height="15" viewBox="0 0 12 15"><defs><linearGradient id="fb" x1="0" y1="0" x2="0" y2="1"><stop offset="0" stop-color="#b49a58"/><stop offset="1" stop-color="#6e80b0"/></linearGradient></defs><path d="M0.5 0.5 H7.5 L10.5 3.5 V13.5 H0.5 Z" fill="#f4f7fc" stroke="url(#fb)" stroke-width="1"/><path d="M7.5 0.5 V3.5 H10.5 Z" fill="#e2bc64" stroke="#c8a050" stroke-width="0.8"/><path d="M2 3.5h4M2 5.5h7M2 7.5h7M2 9.5h7M2 11.5h7" stroke="#7390c8" stroke-width="1"/><path d="M7.4 9.7 Q7.6 8.2 9.2 8.2 Q10.9 8.2 10.9 9.7 Q10.9 10.7 9.4 11.1 V11.9" fill="none" stroke="#fff" stroke-width="3"/><rect x="7.9" y="12.1" width="2.8" height="2.6" fill="#fff"/><path d="M7.4 9.7 Q7.6 8.2 9.2 8.2 Q10.9 8.2 10.9 9.7 Q10.9 10.7 9.4 11.1 V11.9" fill="none" stroke="#1424b0" stroke-width="1.5"/><rect x="8.5" y="12.7" width="1.8" height="1.5" fill="#1424b0"/></svg>
<svg class="a" style="left:90px;top:417px" width="10" height="10" viewBox="0 0 10 10"><path d="M0.8 1.6 L8 4.6 L0.8 7.6" fill="none" stroke="#1c1c1c" stroke-width="1.25"/></svg>
<div class="t" style="left:100px;top:415px;font-size:13.5px;font-weight:400;color:#1c1c1c;font-family:'Liberation Sans',sans-serif;letter-spacing:0.248px;">Trans.ffj</div>
<svg class="a" style="left:38px;top:438px" width="8" height="12" viewBox="0 0 8 12"><path d="M0.6 0.6L5.6 5.6L0.6 10.6Z" fill="#fff" stroke="#111" stroke-width="1.15"/></svg>
<svg class="a" style="left:54px;top:440px" width="16" height="14" viewBox="0 0 16 14"><defs><linearGradient id="fg" x1="0" y1="0" x2="0" y2="1"><stop offset="0" stop-color="#fff2c8"/><stop offset="1" stop-color="#f2c46a"/></linearGradient></defs><path d="M0.5 11.5 V2 Q0.5 1 1.5 1 H5 Q6 1 6 2 V3 H11.5 V11.5 Z" fill="url(#fg)" stroke="#c27a28" stroke-width="1"/><path d="M1 11 L4.5 6 H11.5" fill="none" stroke="#c27a28" stroke-width="1"/><path d="M9.2 7.8 Q9.4 6.4 11 6.4 Q12.8 6.4 12.8 8 Q12.8 9.1 11.2 9.6 V10.6" fill="none" stroke="#1020b8" stroke-width="1.7"/><rect x="10.2" y="11.4" width="2" height="1.6" fill="#1020b8"/><rect x="14" y="5.5" width="1" height="2" fill="#b89060"/></svg>
<svg class="a" style="left:73px;top:440px" width="10" height="10" viewBox="0 0 10 10"><path d="M0.8 1.6 L8 4.6 L0.8 7.6" fill="none" stroke="#9a8248" stroke-width="1.25"/></svg>
<div class="t" style="left:82px;top:438px;font-size:13.5px;font-weight:400;color:#1c1c1c;font-family:'Liberation Sans',sans-serif;letter-spacing:0.411px;">Text</div>
<svg class="a" style="left:56px;top:461px" width="12" height="15" viewBox="0 0 12 15"><defs><linearGradient id="fb" x1="0" y1="0" x2="0" y2="1"><stop offset="0" stop-color="#b49a58"/><stop offset="1" stop-color="#6e80b0"/></linearGradient></defs><path d="M0.5 0.5 H7.5 L10.5 3.5 V13.5 H0.5 Z" fill="#f4f7fc" stroke="url(#fb)" stroke-width="1"/><path d="M7.5 0.5 V3.5 H10.5 Z" fill="#e2bc64" stroke="#c8a050" stroke-width="0.8"/><path d="M2 3.5h4M2 5.5h7M2 7.5h7M2 9.5h7M2 11.5h7" stroke="#7390c8" stroke-width="1"/><path d="M7.4 9.7 Q7.6 8.2 9.2 8.2 Q10.9 8.2 10.9 9.7 Q10.9 10.7 9.4 11.1 V11.9" fill="none" stroke="#fff" stroke-width="3"/><rect x="7.9" y="12.1" width="2.8" height="2.6" fill="#fff"/><path d="M7.4 9.7 Q7.6 8.2 9.2 8.2 Q10.9 8.2 10.9 9.7 Q10.9 10.7 9.4 11.1 V11.9" fill="none" stroke="#1424b0" stroke-width="1.5"/><rect x="8.5" y="12.7" width="1.8" height="1.5" fill="#1424b0"/></svg>
<svg class="a" style="left:72px;top:463px" width="10" height="10" viewBox="0 0 10 10"><path d="M0.8 1.6 L8 4.6 L0.8 7.6" fill="none" stroke="#9a8248" stroke-width="1.25"/></svg>
<div class="t" style="left:82px;top:461px;font-size:13.5px;font-weight:400;color:#1c1c1c;font-family:'Liberation Sans',sans-serif;letter-spacing:0.484px;">EmailClient.features</div>
<div class="a" style="left:226px;top:156px;width:15px;height:323px;background:#e2ddd8;border-left:1px solid #bcb1a5;border-right:1px solid #c4b9ad"></div>
<div class="a" style="left:226px;top:156px;width:15px;height:15px;background:linear-gradient(90deg,#fbfaf9,#e9e5e0);border:1px solid #a39a8f;border-radius:3px"></div>
<svg class="a" style="left:226px;top:156px" width="15" height="15" viewBox="0 0 15 15"><path d="M4 9L7.5 5.5L11 9" fill="none" stroke="#555" stroke-width="1.5"/></svg>
<div class="a" style="left:226px;top:464px;width:15px;height:15px;background:linear-gradient(90deg,#fbfaf9,#e9e5e0);border:1px solid #a39a8f;border-radius:3px"></div>
<svg class="a" style="left:226px;top:464px" width="15" height="15" viewBox="0 0 15 15"><path d="M4 6L7.5 9.5L11 6" fill="none" stroke="#555" stroke-width="1.5"/></svg>
<div class="a" style="left:226px;top:226px;width:15px;height:48px;background:linear-gradient(90deg,#fbfaf9,#e9e5e0);border:1px solid #a39a8f;border-radius:2px"></div>
<div class="a" style="left:230px;top:246px;width:7px;height:7px;border-top:1px solid #999;border-bottom:1px solid #999"></div>
<div class="a" style="left:230px;top:249px;width:7px;height:1px;background:#999"></div>
<div class="a" style="left:11px;top:482px;width:212px;height:15px;background:#e2ddd8;border-top:1px solid #bcb1a5;border-bottom:1px solid #c4b9ad"></div>
<div class="a" style="left:11px;top:482px;width:15px;height:15px;background:linear-gradient(#fbfaf9,#e9e5e0);border:1px solid #a39a8f;border-radius:3px"></div>
<svg class="a" style="left:11px;top:482px" width="15" height="15" viewBox="0 0 15 15"><path d="M9 4L5.5 7.5L9 11" fill="none" stroke="#555" stroke-width="1.5"/></svg>
<div class="a" style="left:208px;top:482px;width:15px;height:15px;background:linear-gradient(#fbfaf9,#e9e5e0);border:1px solid #a39a8f;border-radius:3px"></div>
<svg class="a" style="left:208px;top:482px" width="15" height="15" viewBox="0 0 15 15"><path d="M6 4L9.5 7.5L6 11" fill="none" stroke="#555" stroke-width="1.5"/></svg>
<div class="a" style="left:58px;top:482px;width:98px;height:15px;background:linear-gradient(#fbfaf9,#e9e5e0);border:1px solid #a39a8f;border-radius:2px"></div>
<div class="a" style="left:103px;top:486px;width:5px;height:7px;border-left:1px solid #999;border-right:1px solid #999"></div>
<div class="a" style="left:105px;top:486px;width:1px;height:7px;background:#999"></div>
<div class="a" style="left:247px;top:90px;width:580px;height:370px;border:1px solid #b1a79b;border-radius:6px 6px 0 0;background:#efebe7"></div>
<div class="a" style="left:248px;top:122px;width:578px;height:337px;border:2px solid #d5a56f;background:#efebe7"></div>
<div class="a" style="left:370px;top:121px;width:456px;height:1px;background:#b1a79b"></div>
<svg class="a" style="left:247px;top:90px" width="134" height="34" viewBox="0 0 134 34"><defs><linearGradient id="eg" x1="0" y1="0" x2="0" y2="1"><stop offset="0" stop-color="#f4eade"/><stop offset="0.5" stop-color="#dcb388"/><stop offset="1" stop-color="#d5a56f"/></linearGradient></defs><path d="M0.5 34 V6 Q0.5 0.5 6 0.5 H83 C86 0.5 88 2 90 4.5 L104 19 C112 28 118 31.5 128 31.5 V34 Z" fill="url(#eg)"/><path d="M0.5 34 V6 Q0.5 0.5 6 0.5 H83 C86 0.5 88 2 90 4.5 L104 19 C112 28 118 31.5 128 31.5" fill="none" stroke="#b1a79b" stroke-width="1"/></svg>
<div class="a" style="left:250px;top:124px;width:12px;height:315px;background:#efebe7"></div>
<div class="a" style="left:262px;top:124px;width:8px;height:315px;background:#fff"></div>
<div class="a" style="left:270px;top:124px;width:1px;height:315px;background:#eeeeee"></div>
<div class="a" style="left:271px;top:124px;width:522px;height:315px;background:#fff"></div>
<div class="a" style="left:271px;top:209px;width:522px;height:17px;background:#e8f2fe"></div>
<div class="t" style="left:271px;top:127px;font-size:13.33px;font-weight:400;color:#000;font-family:'Liberation Mono',monospace;">refines class Trans {</div>
<div class="t" style="left:271px;top:144px;font-size:13.33px;font-weight:400;color:#000;font-family:'Liberation Mono',monospace;">  Key key;</div>
<div class="t" style="left:271px;top:161px;font-size:13.33px;font-weight:400;color:#000;font-family:'Liberation Mono',monospace;">  overrides Bool send(Msg m) {</div>
<div class="t" style="left:271px;top:178px;font-size:13.33px;font-weight:400;color:#000;font-family:'Liberation Mono',monospace;">    return new SSL(this).send(m);</div>
<div class="t" style="left:271px;top:195px;font-size:13.33px;font-weight:400;color:#000;font-family:'Liberation Mono',monospace;">  }</div>
<div class="t" style="left:271px;top:212px;font-size:13.33px;font-weight:400;color:#000;font-family:'Liberation Mono',monospace;">}</div>
<div class="a" style="left:279px;top:209px;width:2px;height:17px;background:#000"></div>
<svg class="a" style="left:383px;top:138px" width="41" height="3" viewBox="0 0 41 3"><polyline points="0,2 1,1 2,0 3,1 4,2 5,1 6,0 7,1 8,2 9,1 10,0 11,1 12,2 13,1 14,0 15,1 16,2 17,1 18,0 19,1 20,2 21,1 22,0 23,1 24,2 25,1 26,0 27,1 28,2 29,1 30,0 31,1 32,2 33,1 34,0 35,1 36,2 37,1 38,0 39,1 40,2" fill="none" stroke="#f0683c" stroke-width="1"/></svg>
<svg class="a" style="left:367px;top:172px" width="33" height="3" viewBox="0 0 33 3"><polyline points="0,2 1,1 2,0 3,1 4,2 5,1 6,0 7,1 8,2 9,1 10,0 11,1 12,2 13,1 14,0 15,1 16,2 17,1 18,0 19,1 20,2 21,1 22,0 23,1 24,2 25,1 26,0 27,1 28,2 29,1 30,0 31,1 32,2" fill="none" stroke="#f0683c" stroke-width="1"/></svg>
<svg class="a" style="left:447px;top:172px" width="25" height="3" viewBox="0 0 25 3"><polyline points="0,2 1,1 2,0 3,1 4,2 5,1 6,0 7,1 8,2 9,1 10,0 11,1 12,2 13,1 14,0 15,1 16,2 17,1 18,0 19,1 20,2 21,1 22,0 23,1 24,2" fill="none" stroke="#f0683c" stroke-width="1"/></svg>
<svg class="a" style="left:254px;top:99px" width="12" height="15" viewBox="0 0 12 15"><defs><linearGradient id="fb" x1="0" y1="0" x2="0" y2="1"><stop offset="0" stop-color="#b49a58"/><stop offset="1" stop-color="#6e80b0"/></linearGradient></defs><path d="M0.5 0.5 H7.5 L10.5 3.5 V13.5 H0.5 Z" fill="#f4f7fc" stroke="url(#fb)" stroke-width="1"/><path d="M7.5 0.5 V3.5 H10.5 Z" fill="#e2bc64" stroke="#c8a050" stroke-width="0.8"/><path d="M2 3.5h4M2 5.5h7M2 7.5h7M2 9.5h7M2 11.5h7" stroke="#7390c8" stroke-width="1"/></svg>
<div class="t" style="left:270px;top:100px;font-size:13.5px;font-weight:400;color:#1c1c1c;font-family:'Liberation Sans',sans-serif;letter-spacing:0.373px;">Trans.ffj</div>
<svg class="a" style="left:327px;top:101px" width="10" height="10" viewBox="0 0 10 10"><polygon points="0.5,0.5 2.5,0.5 3.5,1.5 4.5,2.5 5.5,2.5 6.5,1.5 7.5,0.5 9.5,0.5 9.5,2.5 8.5,3.5 7.5,4.5 7.5,5.5 8.5,6.5 9.5,7.5 9.5,9.5 7.5,9.5 6.5,8.5 5.5,7.5 4.5,7.5 3.5,8.5 2.5,9.5 0.5,9.5 0.5,7.5 1.5,6.5 2.5,5.5 2.5,4.5 1.5,3.5 0.5,2.5" fill="#fff" stroke="#000" stroke-width="1.05" stroke-linejoin="miter"/></svg>
<svg class="a" style="left:444px;top:90px" width="7" height="31" viewBox="0 0 7 31"><path d="M0 0.5 Q6.5 0.5 6.5 7 V31" fill="none" stroke="#b1a79b"/></svg>
<svg class="a" style="left:534px;top:90px" width="7" height="31" viewBox="0 0 7 31"><path d="M0 0.5 Q6.5 0.5 6.5 7 V31" fill="none" stroke="#b1a79b"/></svg>
<svg class="a" style="left:712px;top:90px" width="7" height="31" viewBox="0 0 7 31"><path d="M0 0.5 Q6.5 0.5 6.5 7 V31" fill="none" stroke="#b1a79b"/></svg>
<svg class="a" style="left:367px;top:99px" width="12" height="15" viewBox="0 0 12 15"><defs><linearGradient id="fb" x1="0" y1="0" x2="0" y2="1"><stop offset="0" stop-color="#b49a58"/><stop offset="1" stop-color="#6e80b0"/></linearGradient></defs><path d="M0.5 0.5 H7.5 L10.5 3.5 V13.5 H0.5 Z" fill="#f4f7fc" stroke="url(#fb)" stroke-width="1"/><path d="M7.5 0.5 V3.5 H10.5 Z" fill="#e2bc64" stroke="#c8a050" stroke-width="0.8"/><path d="M2 3.5h4M2 5.5h7M2 7.5h7M2 9.5h7M2 11.5h7" stroke="#7390c8" stroke-width="1"/></svg>
<div class="t" style="left:384px;top:100px;font-size:13.5px;font-weight:400;color:#1c1c1c;font-family:'Liberation Sans',sans-serif;letter-spacing:0.414px;">Msg.ffj</div>
<svg class="a" style="left:457px;top:99px" width="12" height="15" viewBox="0 0 12 15"><defs><linearGradient id="fb" x1="0" y1="0" x2="0" y2="1"><stop offset="0" stop-color="#b49a58"/><stop offset="1" stop-color="#6e80b0"/></linearGradient></defs><path d="M0.5 0.5 H7.5 L10.5 3.5 V13.5 H0.5 Z" fill="#f4f7fc" stroke="url(#fb)" stroke-width="1"/><path d="M7.5 0.5 V3.5 H10.5 Z" fill="#e2bc64" stroke="#c8a050" stroke-width="0.8"/><path d="M2 3.5h4M2 5.5h7M2 7.5h7M2 9.5h7M2 11.5h7" stroke="#7390c8" stroke-width="1"/></svg>
<div class="t" style="left:474px;top:100px;font-size:13.5px;font-weight:400;color:#1c1c1c;font-family:'Liberation Sans',sans-serif;letter-spacing:0.411px;">SSL.ffj</div>
<svg class="a" style="left:547px;top:99px" width="12" height="15" viewBox="0 0 12 15"><defs><linearGradient id="fb" x1="0" y1="0" x2="0" y2="1"><stop offset="0" stop-color="#b49a58"/><stop offset="1" stop-color="#6e80b0"/></linearGradient></defs><path d="M0.5 0.5 H7.5 L10.5 3.5 V13.5 H0.5 Z" fill="#f4f7fc" stroke="url(#fb)" stroke-width="1"/><path d="M7.5 0.5 V3.5 H10.5 Z" fill="#e2bc64" stroke="#c8a050" stroke-width="0.8"/><path d="M2 3.5h4M2 5.5h7M2 7.5h7M2 9.5h7M2 11.5h7" stroke="#7390c8" stroke-width="1"/></svg>
<div class="t" style="left:564px;top:100px;font-size:13.5px;font-weight:400;color:#1c1c1c;font-family:'Liberation Sans',sans-serif;letter-spacing:0.484px;">EmailClient.features</div>
<div class="a" style="left:792px;top:99px;width:10px;height:4px;border:1px solid #111;background:#fff"></div>
<div class="a" style="left:810px;top:99px;width:10px;height:10px;border:1px solid #111;background:#fff"></div>
<div class="a" style="left:811px;top:101px;width:8px;height:1px;background:#111"></div>
<div class="a" style="left:796px;top:124px;width:15px;height:315px;background:linear-gradient(90deg,#f8f7f5,#e4e0da);border:1px solid #a39a8f;border-radius:3px"></div>
<div class="a" style="left:796px;top:138px;width:15px;height:287px;border-top:1px solid #a39a8f;border-bottom:1px solid #a39a8f"></div>
<svg class="a" style="left:796px;top:124px" width="15" height="15" viewBox="0 0 15 15"><path d="M4 9L7.5 5.5L11 9" fill="none" stroke="#b8b0a6" stroke-width="1.5"/></svg>
<svg class="a" style="left:796px;top:424px" width="15" height="15" viewBox="0 0 15 15"><path d="M4 6L7.5 9.5L11 6" fill="none" stroke="#b8b0a6" stroke-width="1.5"/></svg>
<div class="a" style="left:800px;top:277px;width:7px;height:7px;border-top:1px solid #999;border-bottom:1px solid #999"></div>
<div class="a" style="left:800px;top:280px;width:7px;height:1px;background:#999"></div>
<div class="a" style="left:271px;top:442px;width:522px;height:15px;background:linear-gradient(#f8f7f5,#e4e0da);border:1px solid #a39a8f;border-radius:3px"></div>
<div class="a" style="left:285px;top:442px;width:494px;height:15px;border-left:1px solid #a39a8f;border-right:1px solid #a39a8f"></div>
<svg class="a" style="left:271px;top:442px" width="14" height="15" viewBox="0 0 14 15"><path d="M8.5 4L5 7.5L8.5 11" fill="none" stroke="#b8b0a6" stroke-width="1.5"/></svg>
<svg class="a" style="left:779px;top:442px" width="14" height="15" viewBox="0 0 14 15"><path d="M5.5 4L9 7.5L5.5 11" fill="none" stroke="#b8b0a6" stroke-width="1.5"/></svg>
<div class="a" style="left:528px;top:446px;width:7px;height:7px;border-left:1px solid #999;border-right:1px solid #999"></div>
<div class="a" style="left:531px;top:446px;width:1px;height:7px;background:#999"></div>
<div class="a" style="left:247px;top:463px;width:580px;height:37px;border:1px solid #b1a79b;border-radius:6px 6px 0 0;background:#efebe7"></div>
<div class="a" style="left:248px;top:494px;width:578px;height:1px;background:#b1a79b"></div>
<svg class="a" style="left:335px;top:463px" width="7" height="31" viewBox="0 0 7 31"><path d="M6.5 0.5 Q0.5 0.5 0.5 7 V31" fill="none" stroke="#b1a79b"/></svg>
<svg class="a" style="left:412px;top:463px" width="7" height="31" viewBox="0 0 7 31"><path d="M6.5 0.5 Q0.5 0.5 0.5 7 V31" fill="none" stroke="#b1a79b"/></svg>
<svg class="a" style="left:504px;top:463px" width="7" height="31" viewBox="0 0 7 31"><path d="M6.5 0.5 Q0.5 0.5 0.5 7 V31" fill="none" stroke="#b1a79b"/></svg>
<svg class="a" style="left:583px;top:463px" width="128" height="33" viewBox="0 0 128 33"><defs><linearGradient id="bg2" x1="0" y1="0" x2="0" y2="1"><stop offset="0" stop-color="#ffffff"/><stop offset="1" stop-color="#efebe7"/></linearGradient></defs><path d="M0.5 32 V6 Q0.5 0.5 6 0.5 H79 C82 0.5 84 2 86 4.5 L100 19 C108 28 114 31.5 124 31.5 V32 Z" fill="url(#bg2)"/><path d="M0.5 32 V6 Q0.5 0.5 6 0.5 H79 C82 0.5 84 2 86 4.5 L100 19 C108 28 114 31.5 124 31.5" fill="none" stroke="#b1a79b"/></svg>
<div class="a" style="left:584px;top:494px;width:121px;height:5px;background:linear-gradient(#f4f2ef,#efebe7)"></div>
<svg class="a" style="left:777px;top:463px" width="7" height="31" viewBox="0 0 7 31"><path d="M0 0.5 Q6.5 0.5 6.5 7 V31" fill="none" stroke="#b1a79b"/></svg>
<svg class="a" style="left:252px;top:471px" width="15" height="15" viewBox="0 0 15 15"><rect x="0.5" y="0.5" width="10" height="14" fill="#eef6fc" stroke="#7a88b0"/><path d="M0.5 0.5H10.5" stroke="#a89858"/><path d="M1 7.5H10" stroke="#a8b4d0"/><circle cx="5.3" cy="4.2" r="2.7" fill="#e02a3a"/><path d="M2.5 13.5 L5.3 8.8 L8.1 13.5 Z" fill="#f0a020" stroke="#d08010" stroke-width="0.6"/><path d="M10.5 0.5 Q13.5 0.8 13 3.5 Q12 5 13.5 7 Q12 9 13.5 11 Q13 14.5 10.5 14.5" fill="#f0f6fc" stroke="#8aaad8"/></svg>
<div class="t" style="left:270px;top:473px;font-size:13.5px;font-weight:400;color:#1c1c1c;font-family:'Liberation Sans',sans-serif;letter-spacing:0.710px;">Problems</div>
<svg class="a" style="left:341px;top:471px" width="13" height="14" viewBox="0 0 13 14"><text x="0" y="11" font-family="Liberation Sans" font-size="13" font-weight="bold" fill="#2a6ab8">@</text></svg>
<div class="t" style="left:357px;top:473px;font-size:13.5px;font-weight:400;color:#1c1c1c;font-family:'Liberation Sans',sans-serif;letter-spacing:0.284px;">Javadoc</div>
<svg class="a" style="left:416px;top:470px" width="16" height="17" viewBox="0 0 16 17"><path d="M0.5 0.5 H8.5 L11.5 3.5 V13.5 H0.5 Z" fill="#f3f6fc" stroke="#9c8c5c"/><path d="M6 4 Q4 4 4 6 Q3 7 4 8 Q4 10 6 10" fill="none" stroke="#2a4a98" stroke-width="1.2"/><path d="M6.5 6.5h3M6.5 8h3" stroke="#2a4a98"/><path d="M7.5 11 H11 V9 L15.5 12.5 L11 16 V14 H7.5 Z" fill="#fde89a" stroke="#c8901a"/></svg>
<div class="t" style="left:435px;top:473px;font-size:13.5px;font-weight:400;color:#1c1c1c;font-family:'Liberation Sans',sans-serif;letter-spacing:0.715px;">Declarati</div>
<svg class="a" style="left:509px;top:470px" width="15" height="15" viewBox="0 0 15 15"><rect x="0.5" y="0.5" width="13" height="10" rx="1" fill="#dceaf8" stroke="#2a5aa8" stroke-width="1.4"/><path d="M3 3.5h6M3 6h7" stroke="#2a5aa8"/><path d="M4 13.5H10M7 11V13.5" stroke="#2a5aa8" stroke-width="1.6"/></svg>
<div class="t" style="left:527px;top:473px;font-size:13.5px;font-weight:400;color:#1c1c1c;font-family:'Liberation Sans',sans-serif;letter-spacing:0.578px;">Console</div>
<svg class="a" style="left:586px;top:470px" width="17" height="16" viewBox="0 0 17 16"><path d="M1 14 L6 9 L9 12 L4 16 Z" fill="#fff3b0" stroke="#f0b040" stroke-width="1"/><path d="M5 8 L8 5 L12 9 L9 12 Z" fill="#a8a4a8" stroke="#6a6060" stroke-width="0.8"/><path d="M8 5 L14 0.8 L16.5 3.5 L12 9 Z" fill="#f8d890" stroke="#d08a20" stroke-width="1"/></svg>
<div class="t" style="left:607px;top:473px;font-size:13.5px;font-weight:400;color:#1c1c1c;font-family:'Liberation Sans',sans-serif;letter-spacing:0.444px;">Search</div>
<svg class="a" style="left:660px;top:474px" width="10" height="10" viewBox="0 0 10 10"><polygon points="0.5,0.5 2.5,0.5 3.5,1.5 4.5,2.5 5.5,2.5 6.5,1.5 7.5,0.5 9.5,0.5 9.5,2.5 8.5,3.5 7.5,4.5 7.5,5.5 8.5,6.5 9.5,7.5 9.5,9.5 7.5,9.5 6.5,8.5 5.5,7.5 4.5,7.5 3.5,8.5 2.5,9.5 0.5,9.5 0.5,7.5 1.5,6.5 2.5,5.5 2.5,4.5 1.5,3.5 0.5,2.5" fill="#fff" stroke="#000" stroke-width="1.05" stroke-linejoin="miter"/></svg>
<svg class="a" style="left:696px;top:469px" width="17" height="18" viewBox="0 0 17 18"><path d="M1 4.5H6M4 2.5V6.5M1 14.5H6M4 12.5V16.5M7 9.5H12M10 7.5V11.5" stroke="#5a6080" stroke-width="1.1"/><circle cx="8.5" cy="4.5" r="2.3" fill="#3d9a47" stroke="#237a30" stroke-width="0.8"/><circle cx="14.3" cy="9.5" r="2.3" fill="#3d9a47" stroke="#237a30" stroke-width="0.8"/><circle cx="8.5" cy="14.5" r="2.3" fill="#3d9a47" stroke="#237a30" stroke-width="0.8"/></svg>
<div class="t" style="left:717px;top:473px;font-size:13.5px;font-weight:400;color:#1c1c1c;font-family:'Liberation Sans',sans-serif;letter-spacing:0.302px;">Call Hiera</div>
<div class="a" style="left:792px;top:472px;width:10px;height:4px;border:1px solid #111;background:#fff"></div>
<div class="a" style="left:810px;top:472px;width:10px;height:10px;border:1px solid #111;background:#fff"></div>
<div class="a" style="left:811px;top:474px;width:8px;height:1px;background:#111"></div>
<div class="a" style="left:831px;top:96px;width:27px;height:2px;background:#fff"></div>
<div class="a" style="left:831px;top:98px;width:28px;height:1px;background:#ab9f93"></div>
<div class="a" style="left:858px;top:96px;width:1px;height:3px;background:#ab9f93"></div>
<svg class="a" style="left:838px;top:110px" width="16" height="16" viewBox="0 0 16 16"><rect x="1.5" y="3.5" width="5" height="11" fill="#e4f4fc" stroke="#9a9270"/><rect x="1.5" y="3.5" width="5" height="2" fill="#3a7ac8"/><path d="M11.5 1.0 L12.7 3.3 L15.0 4.5 L12.7 5.7 L11.5 8.0 L10.3 5.7 L8.0 4.5 L10.3 3.3 Z" fill="#f7e27a" stroke="#a8800c" stroke-width="1"/><path d="M11.5 2.0V7.0M9.0 4.5H14.0" stroke="#fffbe0" stroke-width="0.8"/></svg>
<div class="a" style="left:194px;top:502px;width:2px;height:25px;background:linear-gradient(90deg,#b3a79b 1px,#f8f6f4 1px)"></div>
<div class="a" style="left:313px;top:502px;width:2px;height:25px;background:linear-gradient(90deg,#b3a79b 1px,#f8f6f4 1px)"></div>
<div class="a" style="left:425px;top:502px;width:2px;height:25px;background:linear-gradient(90deg,#b3a79b 1px,#f8f6f4 1px)"></div>
<div class="a" style="left:540px;top:504px;width:2px;height:27px;background:#fff"></div>
<div class="a" style="left:542px;top:504px;width:1px;height:28px;background:#ab9f93"></div>
<div class="a" style="left:540px;top:531px;width:3px;height:1px;background:#ab9f93"></div>
<div class="t" style="left:201px;top:508px;font-size:13.5px;font-weight:400;color:#1c1c1c;font-family:'Liberation Sans',sans-serif;letter-spacing:0.388px;">Writable</div>
<div class="t" style="left:320px;top:508px;font-size:13.5px;font-weight:400;color:#1c1c1c;font-family:'Liberation Sans',sans-serif;letter-spacing:0.847px;">Insert</div>
<div class="t" style="left:432px;top:508px;font-size:13.5px;font-weight:400;color:#1c1c1c;font-family:'Liberation Sans',sans-serif;letter-spacing:0.930px;">6 : 2</div>
</body></html>
